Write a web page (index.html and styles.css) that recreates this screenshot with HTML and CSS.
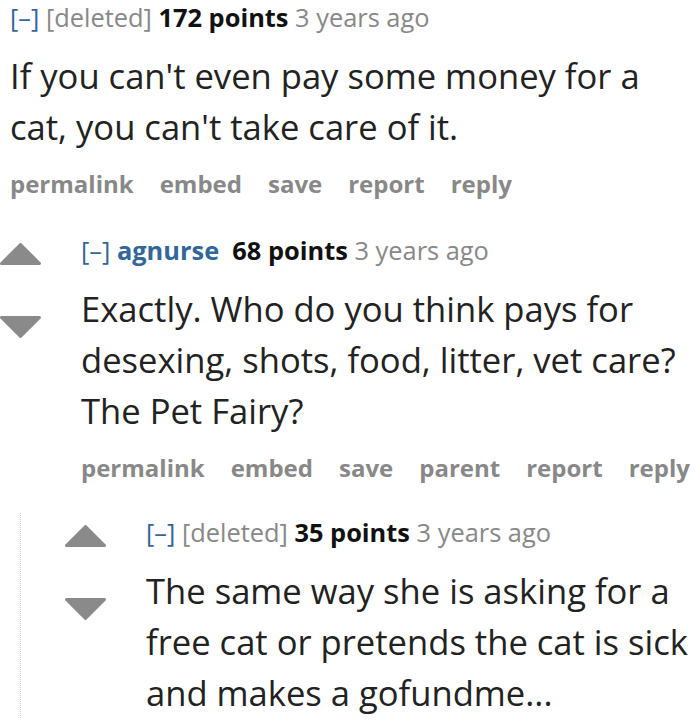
FILE: index.html
```html
<!DOCTYPE html>
<html>
<head>
<meta charset="utf-8">
<link rel="stylesheet" href="styles.css">
</head>
<body>
<div class="thread">
  <div class="comment top">
    <div class="entry">
      <p class="tagline"><span class="expand">[–]</span> <span class="deleted">[deleted]</span> <span class="score">172 points</span> <span class="time">3 years ago</span></p>
      <div class="md">If you can't even pay some money for a cat, you can't take care of it.</div>
      <ul class="buttons"><li>permalink</li><li>embed</li><li>save</li><li>report</li><li>reply</li></ul>
    </div>
  </div>

  <div class="comment">
    <div class="votes">
      <svg class="arrow" viewBox="0 0 41 22"><polygon points="20.5,1.5 39.5,20.5 1.5,20.5"/></svg>
      <svg class="arrow" viewBox="0 0 41 22"><polygon points="1.5,1.5 39.5,1.5 20.5,20.5"/></svg>
    </div>
    <div class="entry">
      <p class="tagline"><span class="expand">[–]</span> <span class="author">agnurse</span>&nbsp; <span class="score">68 points</span> <span class="time">3 years ago</span></p>
      <div class="md">Exactly. Who do you think pays for desexing, shots, food, litter, vet care? The Pet Fairy?</div>
      <ul class="buttons"><li>permalink</li><li>embed</li><li>save</li><li>parent</li><li>report</li><li>reply</li></ul>
    </div>
  </div>

  <div class="child">
    <div class="comment">
      <div class="votes">
        <svg class="arrow" viewBox="0 0 41 22"><polygon points="20.5,1.5 39.5,20.5 1.5,20.5"/></svg>
        <svg class="arrow" viewBox="0 0 41 22"><polygon points="1.5,1.5 39.5,1.5 20.5,20.5"/></svg>
      </div>
      <div class="entry">
        <p class="tagline"><span class="expand">[–]</span> <span class="deleted">[deleted]</span> <span class="score">35 points</span> <span class="time">3 years ago</span></p>
        <div class="md">The same way she is asking for a free cat or pretends the cat is sick and makes a gofundme...</div>
      </div>
    </div>
  </div>
</div>
</body>
</html>
```
FILE: styles.css
```css
html, body {
  margin: 0;
  padding: 0;
  background: #ffffff;
}

body {
  font-family: "Open Sans", "Noto Sans", sans-serif;
  color: #222222;
  width: 700px;
  height: 722px;
  overflow: hidden;
}

.thread {
  display: flex;
  flex-direction: column;
}

.comment {
  display: flex;
  align-items: flex-start;
}

.comment.top {
  padding-left: 10px;
}

.votes {
  width: 41px;
  flex: none;
  display: flex;
  flex-direction: column;
  gap: 51px;
  padding-top: 10px;
}

.arrow {
  display: block;
  width: 41px;
  height: 22px;
}

.arrow polygon {
  fill: #8a8a8a;
  stroke: #8a8a8a;
  stroke-width: 3;
  stroke-linejoin: round;
}

.comment .votes + .entry {
  margin-left: 40px;
}

.entry {
  flex: 1;
  min-width: 0;
}

.tagline {
  margin: 0;
  font-size: 25.4px;
  line-height: 34px;
  color: #888888;
  white-space: nowrap;
}

.expand {
  color: #336699;
}

.deleted {
  color: #888888;
}

.author {
  color: #336699;
  font-weight: 700;
}

.score {
  color: #111111;
  font-weight: 700;
}

.time {
  color: #888888;
}

.md {
  margin-top: 16px;
  font-size: 34.6px;
  line-height: 51px;
  color: #222222;
  max-width: 614px;
}

.top .md {
  max-width: 660px;
}

.buttons {
  list-style: none;
  margin: 15px 0 0;
  padding: 0;
  display: flex;
  gap: 26px;
  font-size: 24px;
  line-height: 34px;
  font-weight: 700;
  color: #888888;
}

.comment + .comment {
  margin-top: 32px;
}

.child {
  margin-top: 28px;
  margin-left: 20px;
  padding-left: 44px;
  padding-top: 2px;
  border-left: 1px dotted #ccccf0;
}

.child .md {
  max-width: 556px;
}
```
